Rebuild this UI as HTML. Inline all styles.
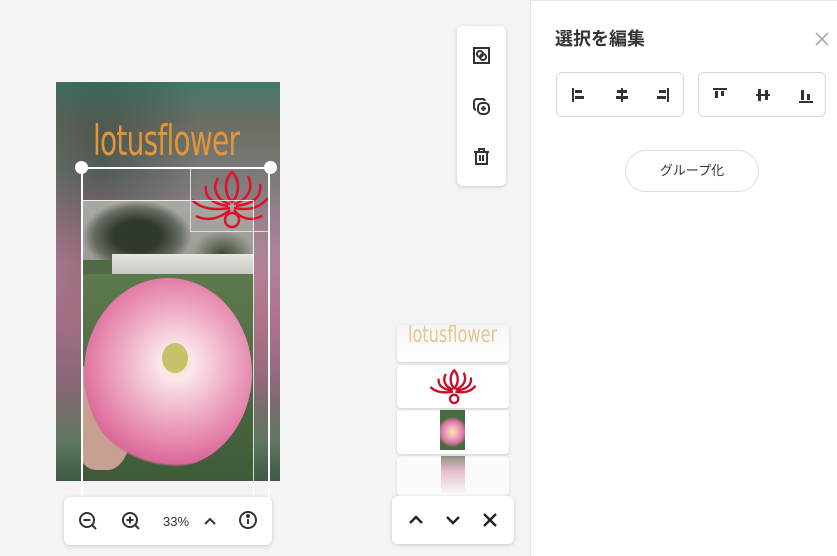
<!DOCTYPE html>
<html><head><meta charset="utf-8"><style>
*{margin:0;padding:0;box-sizing:border-box}
body{width:837px;height:556px;background:#f4f4f4;font-family:"Liberation Sans","Noto Sans CJK JP",sans-serif;position:relative;overflow:hidden}
.abs{position:absolute}
.panel{left:530px;top:0;width:307px;height:556px;background:#fff;border-left:1px solid #e6e6e6;border-top:1px solid #e6e6e6}
.grp{border:1.5px solid #d8d8d8;border-radius:6px;height:45px;top:71px;width:128px;background:#fff}
.card{background:#fff;border-radius:6px;box-shadow:0 1px 4px rgba(0,0,0,.18)}
.lc{left:397px;width:112px;background:#fff;border-radius:4px;box-shadow:0 1px 3px rgba(0,0,0,.15);overflow:hidden}
</style></head><body>
<div class="abs" style="left:56px;top:82px;width:224px;height:399px;overflow:hidden;background:linear-gradient(180deg,#3f7a6c 0%,#6b6d63 10%,#787a76 22%,#8f7f88 32%,#a58a98 45%,#9b6f82 60%,#8a6677 75%,#5f7760 90%,#3d5a44 100%)">
 <div class="abs" style="left:0;top:0;width:224px;height:399px;background:radial-gradient(ellipse at 20% 20%,rgba(40,60,50,.5),transparent 40%),radial-gradient(ellipse at 15% 45%,rgba(210,110,150,.6),transparent 30%),radial-gradient(ellipse at 90% 55%,rgba(200,120,150,.5),transparent 35%)"></div>
 <div class="abs" style="left:37px;top:34px;font-family:'DejaVu Sans Condensed','Liberation Sans Narrow',sans-serif;font-size:42px;color:#e3953a;letter-spacing:-1px;transform:scaleX(.74);transform-origin:left">lotusflower</div>
</div>
<div class="abs" style="left:82px;top:200px;width:172px;height:281px;overflow:hidden;background:#4f6a45">
 <div class="abs" style="left:0;top:0;width:172px;height:60px;background:linear-gradient(180deg,#a8a8a4,#9d9c96)"></div>
 <div class="abs" style="left:0;top:0;width:110px;height:60px;background:radial-gradient(ellipse at 50% 60%,#2f3a2a 30%,rgba(60,70,55,.6) 55%,transparent 70%)"></div>
 <div class="abs" style="left:110px;top:30px;width:62px;height:30px;background:radial-gradient(ellipse at 50% 80%,#3a4a30,transparent 70%)"></div>
 <div class="abs" style="left:30px;top:54px;width:142px;height:20px;background:linear-gradient(180deg,#e6e6e2,#c9c8c2)"></div>
 <div class="abs" style="left:0;top:74px;width:172px;height:207px;background:linear-gradient(180deg,#5d7a4e,#3e5a38)"></div>
 <div class="abs" style="left:-10px;top:160px;width:60px;height:110px;border-radius:40%;background:#c8a090"></div>
 <div class="abs" style="left:2px;top:78px;width:168px;height:190px;border-radius:50%;background:radial-gradient(circle at 55% 45%,#f6e8b0 0,#fbe6ea 12%,#f0b4cc 35%,#e480a8 60%,#d8689a 72%,transparent 74%)"></div>
 <div class="abs" style="left:80px;top:143px;width:26px;height:30px;border-radius:50%;background:#c5c26a"></div>
</div>
<svg class="abs" style="left:190px;top:168px" width="80" height="64" viewBox="0 0 80 64">
 <rect x=".5" y=".5" width="79" height="63" fill="none" stroke="#ddd" stroke-width="1"/>
 <g fill="none" stroke="#e0102a" stroke-width="2.5">
 <path d="M42 4 C34 12 34 26 42 34 C50 26 50 12 42 4Z"/>
 <path d="M28 10 C22 20 26 32 40 36 M58 8 C64 20 58 32 44 36"/>
 <path d="M16 18 C14 30 24 36 38 38 M70 16 C72 30 62 36 46 38"/>
 <path d="M2 32 C12 42 26 42 40 40 M78 30 C68 42 56 42 44 40"/>
 <path d="M6 48 C18 54 30 50 40 42 M72 48 C60 54 50 50 44 42"/>
 <circle cx="42" cy="52" r="7"/>
 </g>
</svg>
<div class="abs" style="left:81px;top:167px;width:189px;height:340px;border:2px solid #fff;border-bottom:none"></div>
<div class="abs" style="left:82px;top:200px;width:172px;height:300px;border:1px solid rgba(255,255,255,.8);border-bottom:none"></div>
<div class="abs" style="left:75px;top:161px;width:13px;height:13px;border-radius:50%;background:#fff"></div>
<div class="abs" style="left:264px;top:161px;width:13px;height:13px;border-radius:50%;background:#fff"></div>
<div class="abs card" style="left:64px;top:497px;width:208px;height:48px">
 <svg class="abs" style="left:14px;top:14px" width="20" height="20" viewBox="0 0 20 20" fill="none" stroke="#333" stroke-width="2"><circle cx="9" cy="9" r="7"/><path d="M5.5 9h7M14 14l4 4"/></svg>
 <svg class="abs" style="left:57px;top:14px" width="20" height="20" viewBox="0 0 20 20" fill="none" stroke="#333" stroke-width="2"><circle cx="9" cy="9" r="7"/><path d="M5.5 9h7M9 5.5v7M14 14l4 4"/></svg>
 <div class="abs" style="left:99px;top:17px;font-size:13px;color:#333">33%</div>
 <svg class="abs" style="left:140px;top:20px" width="12" height="8" viewBox="0 0 12 8" fill="none" stroke="#333" stroke-width="2"><path d="M1 7l5-5 5 5"/></svg>
 <svg class="abs" style="left:174px;top:13px" width="20" height="20" viewBox="0 0 20 20" fill="none" stroke="#333" stroke-width="2"><circle cx="10" cy="10" r="8"/><path d="M10 9v5"/><circle cx="10" cy="6" r="1" fill="#333"/></svg>
</div>
<div class="abs card" style="left:457px;top:26px;width:49px;height:160px">
 <svg class="abs" style="left:15px;top:20px" width="19" height="19" viewBox="0 0 19 19" fill="none" stroke="#333" stroke-width="2"><rect x="2" y="2" width="15" height="15"/><circle cx="8" cy="8" r="3"/><circle cx="11" cy="11" r="3"/></svg>
 <svg class="abs" style="left:15px;top:71px" width="19" height="19" viewBox="0 0 19 19" fill="none" stroke="#333" stroke-width="2"><path d="M4 13a3 3 0 0 1-2-3V5a3 3 0 0 1 3-3h5a3 3 0 0 1 3 2"/><rect x="6" y="6" width="11" height="11" rx="4"/><path d="M11.5 9v5M9 11.5h5"/></svg>
 <svg class="abs" style="left:15px;top:121px" width="19" height="19" viewBox="0 0 19 19" fill="none" stroke="#333" stroke-width="2"><path d="M2 5h15M7 5V2h5v3M4 5v12h11V5M8 8v6M11 8v6"/></svg>
</div>
<div class="abs lc" style="top:456px;height:40px;opacity:.7"><div class="abs" style="left:44px;top:0;width:24px;height:38px;background:linear-gradient(180deg,#6a6a5a,#e2a6bc 40%,#fff)"></div></div>
<div class="abs lc" style="top:410px;height:44px"><div class="abs" style="left:43px;top:0;width:25px;height:40px;background:radial-gradient(circle at 50% 55%,#f6e3a0 5%,#eca6c2 25%,#d9739e 45%,#4a6a40 60%)"></div></div>
<div class="abs lc" style="top:365px;height:43px">
 <svg class="abs" style="left:30px;top:3px" width="52" height="38" viewBox="0 0 80 64"><g fill="none" stroke="#c8102a" stroke-width="4"><path d="M42 4 C34 12 34 26 42 34 C50 26 50 12 42 4Z"/><path d="M28 10 C22 20 26 32 40 36 M58 8 C64 20 58 32 44 36"/><path d="M16 18 C14 30 24 36 38 38 M70 16 C72 30 62 36 46 38"/><path d="M2 32 C12 42 26 42 40 40 M78 30 C68 42 56 42 44 40"/><circle cx="42" cy="52" r="7"/></g></svg>
</div>
<div class="abs lc" style="top:325px;height:37px;background:linear-gradient(180deg,#f6f6f6,#fff)"><div class="abs" style="left:11px;top:-3px;font-family:'DejaVu Sans Condensed',sans-serif;font-size:23px;color:#e8c490;transform:scaleX(.78);transform-origin:left">lotusflower</div></div>
<div class="abs card" style="left:392px;top:496px;width:122px;height:48px">
 <svg class="abs" style="left:17px;top:19px" width="14" height="9" viewBox="0 0 14 9" fill="none" stroke="#222" stroke-width="2.4"><path d="M1 8l6-6 6 6"/></svg>
 <svg class="abs" style="left:54px;top:20px" width="14" height="9" viewBox="0 0 14 9" fill="none" stroke="#222" stroke-width="2.4"><path d="M1 1l6 6 6-6"/></svg>
 <svg class="abs" style="left:90px;top:16px" width="16" height="16" viewBox="0 0 16 16" fill="none" stroke="#222" stroke-width="2.4"><path d="M2 2l12 12M14 2L2 14"/></svg>
</div>
<div class="abs panel">
 <div class="abs" style="left:24px;top:24px;font-size:18px;font-weight:bold;color:#333">選択を編集</div>
 <svg class="abs" style="left:284px;top:31px" width="14" height="14" viewBox="0 0 14 14" fill="none" stroke="#aaa" stroke-width="1.6"><path d="M1 1l12 12M13 1L1 13"/></svg>
 <div class="abs grp" style="left:25px">
  <svg class="abs" style="left:14px;top:14px" width="100" height="16" viewBox="0 0 100 16" fill="#333"><rect x="1" y="1" width="2" height="14"/><rect x="4" y="3" width="7" height="3"/><rect x="4" y="9" width="9" height="3"/><rect x="50" y="1" width="2" height="14"/><rect x="46" y="3" width="10" height="3"/><rect x="45" y="9" width="12" height="3"/><rect x="96" y="1" width="2" height="14"/><rect x="88" y="3" width="7" height="3"/><rect x="86" y="9" width="9" height="3"/></svg>
 </div>
 <div class="abs grp" style="left:167px">
  <svg class="abs" style="left:14px;top:14px" width="100" height="16" viewBox="0 0 100 16" fill="#333"><rect x="0" y="1" width="14" height="2"/><rect x="2" y="4" width="3" height="7"/><rect x="8" y="4" width="3" height="5"/><rect x="43" y="7" width="14" height="2"/><rect x="45" y="2" width="3" height="12"/><rect x="52" y="3" width="3" height="10"/><rect x="86" y="14" width="14" height="2"/><rect x="88" y="3" width="3" height="10"/><rect x="94" y="7" width="3" height="6"/></svg>
 </div>
 <div class="abs" style="left:94px;top:149px;width:134px;height:42px;border:1.5px solid #ddd;border-radius:21px;text-align:center;line-height:39px;font-size:13px;color:#333">グループ化</div>
</div>
</body></html>
